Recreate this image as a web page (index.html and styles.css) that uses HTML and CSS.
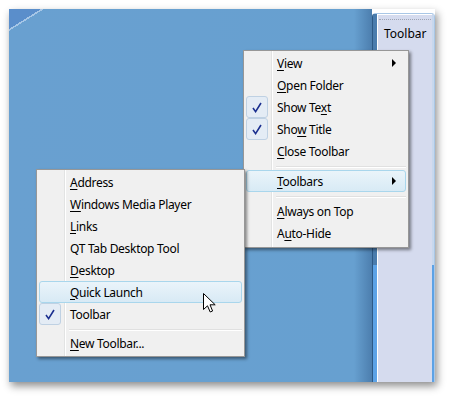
FILE: index.html
```html
<html>
  <head>
    <title>Toolbar menu</title>
    <meta content="text/html;charset=utf-8" http-equiv="Content-Type" />
    <link rel="stylesheet" href="styles.css">
  </head>
  <body>
    <div class="screen">
      <div class="desktop"></div>
      <div class="taskbar">
        <div class="tb-edge"></div>
        <div class="tb-panel">
          <div class="tb-grip"></div>
          <div class="tb-title">Toolbar</div>
        </div>
        <div class="tb-edge-r"></div>
      </div>

      <div class="menu menu-main">
        <div class="item"><span class="check"></span><span class="label"><u>V</u>iew</span><span class="arrow"></span></div>
        <div class="item"><span class="check"></span><span class="label"><u>O</u>pen Folder</span></div>
        <div class="item"><span class="check on"><svg width="10" height="11" viewBox="0 0 10 11"><path d="M1 6 L3.6 9.6 L9 1" fill="none" stroke="#1b2f8f" stroke-width="1.6"/></svg></span><span class="label">Show Te<u>x</u>t</span></div>
        <div class="item"><span class="check on"><svg width="10" height="11" viewBox="0 0 10 11"><path d="M1 6 L3.6 9.6 L9 1" fill="none" stroke="#1b2f8f" stroke-width="1.6"/></svg></span><span class="label">Sho<u>w</u> Title</span></div>
        <div class="item"><span class="check"></span><span class="label"><u>C</u>lose Toolbar</span></div>
        <div class="sep"></div>
        <div class="item hot"><span class="check"></span><span class="label"><u>T</u>oolbars</span><span class="arrow"></span></div>
        <div class="sep"></div>
        <div class="item"><span class="check"></span><span class="label"><u>A</u>lways on Top</span></div>
        <div class="item"><span class="check"></span><span class="label">A<u>u</u>to-Hide</span></div>
      </div>

      <div class="menu menu-sub">
        <div class="item"><span class="check"></span><span class="label"><u>A</u>ddress</span></div>
        <div class="item"><span class="check"></span><span class="label"><u>W</u>indows Media Player</span></div>
        <div class="item"><span class="check"></span><span class="label"><u>L</u>inks</span></div>
        <div class="item"><span class="check"></span><span class="label">QT Tab Desktop Tool</span></div>
        <div class="item"><span class="check"></span><span class="label"><u>D</u>esktop</span></div>
        <div class="item hot"><span class="check"></span><span class="label"><u>Q</u>uick Launch</span></div>
        <div class="item"><span class="check on"><svg width="10" height="11" viewBox="0 0 10 11"><path d="M1 6 L3.6 9.6 L9 1" fill="none" stroke="#1b2f8f" stroke-width="1.6"/></svg></span><span class="label">Toolbar</span></div>
        <div class="sep"></div>
        <div class="item"><span class="check"></span><span class="label"><u>N</u>ew Toolbar...</span></div>
      </div>

      <svg class="pointer" width="14" height="21" viewBox="0 0 14 21">
        <path d="M0.5 0.5 L0.5 16.5 L4.5 12.8 L7.2 19 L9.6 18 L7 11.8 L12.2 11.8 Z" fill="#fff" stroke="#000" stroke-width="1"/>
      </svg>
    </div>
  </body>
</html>
```

FILE: styles.css
```css
html,
body {
  margin: 0;
  padding: 0;
  background-color: #fff;
}
body {
  font-family: 'Noto Sans', 'Open Sans', sans-serif;
  font-size: 12px;
  color: #000;
}
.screen {
  position: relative;
  display: flex;
  width: 426px;
  height: 373px;
  margin: 9px 0 0 9px;
  box-shadow: 2px 4px 8px rgba(0, 0, 0, 0.45);
}
.desktop {
  flex: 1;
  background:
    linear-gradient(148deg, #5a8ecb 0, #5a8ecb 17px, #a6c6e6 17px, #a6c6e6 18.5px, transparent 18.5px),
    linear-gradient(to right, #69a0d0 0, #67a0d0 345px, #4c7eae 363px);
}
.taskbar {
  display: flex;
  width: 63px;
  margin-top: 4px;
  border: 1px solid #a9c7e6;
  border-left-color: #2d5985;
  border-bottom: 0;
  border-radius: 4px 4px 0 0;
  box-sizing: border-box;
  background: #d5dbee;
}
.tb-edge {
  width: 4px;
  background: linear-gradient(to bottom, #4a7cad 0, #4a7cad 251px, #5ca2e6 251px);
}
.tb-panel {
  flex: 1;
  border-left: 1px solid #fff;
  border-top: 1px solid #fff;
  background: #d5dbee;
}
.tb-grip {
  margin: 4px 1px 0 1px;
  border-top: 1px dotted #9ea4b4;
}
.tb-title {
  padding: 5px 0 0 6px;
  font-size: 12px;
}
.tb-edge-r {
  width: 2px;
  background: linear-gradient(to bottom, #c7d8ee 0, #c7d8ee 251px, #5ca2e6 251px);
}

/* context menus */
.menu {
  position: absolute;
  display: flex;
  flex-direction: column;
  box-sizing: border-box;
  padding: 1px 2px 2px 2px;
  border: 1px solid #979797;
  background:
    linear-gradient(to right, transparent 27px, #e2e3e3 27px, #e2e3e3 28px, #fff 28px, #fff 29px, transparent 29px),
    #f0f0f0;
  box-shadow: 2px 2px 3px rgba(0, 0, 0, 0.45);
}
.menu-main {
  left: 234px;
  top: 41px;
  width: 166px;
  height: 198px;
}
.menu-sub {
  left: 27px;
  top: 160px;
  width: 209px;
  height: 188px;
}
.item {
  display: flex;
  align-items: center;
  height: 22px;
  box-sizing: border-box;
  border: 1px solid transparent;
  border-radius: 3px;
}
.item.hot {
  border-color: #a9d6ec;
  background: linear-gradient(to bottom, #eaf4fa, #d8eaf5);
}
.check {
  display: flex;
  align-items: center;
  justify-content: center;
  width: 20px;
  height: 20px;
  margin-left: -1px;
  border: 1px solid transparent;
  border-radius: 3px;
}
.check.on {
  border-color: #bfd1e3;
  background: #e4ecf5;
}
.label {
  flex: 1;
  margin-left: 9px;
  white-space: nowrap;
  letter-spacing: -0.3px;
}
.label u {
  text-underline-offset: 2px;
}
.arrow {
  width: 0;
  height: 0;
  margin-right: 9px;
  border-top: 4px solid transparent;
  border-bottom: 4px solid transparent;
  border-left: 4px solid #000;
}
.sep {
  height: 8px;
  margin-left: 30px;
  background: linear-gradient(to bottom, transparent 4px, #e0e0e0 4px, #e0e0e0 5px, #fff 5px, #fff 6px, transparent 6px);
}
.menu-main .sep:first-of-type {
  height: 9px;
}
.pointer {
  position: absolute;
  left: 194px;
  top: 284px;
}
```
